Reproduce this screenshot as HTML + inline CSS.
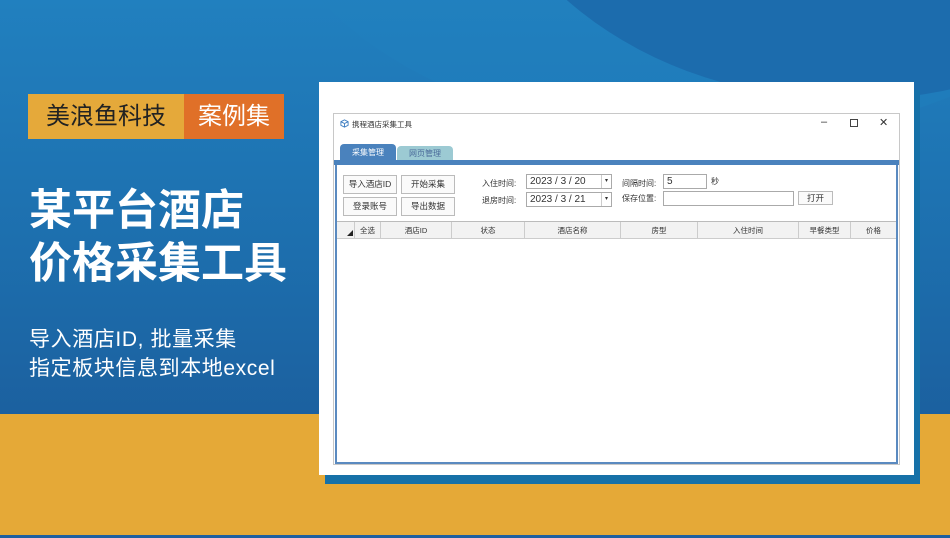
<!DOCTYPE html>
<html><head><meta charset="utf-8"><style>
*{margin:0;padding:0;box-sizing:border-box}
body{width:950px;height:538px;overflow:hidden;position:relative;font-family:"Liberation Sans","Noto Sans CJK SC",sans-serif;background:#1d6aa9}
.bg{position:absolute;inset:0;background:linear-gradient(180deg,#2180bf 0%,#1d6fae 45%,#1b5f9e 80%)}
.curve{position:absolute;left:260px;top:-420px;width:900px;height:560px;border-radius:50%;background:linear-gradient(180deg,#2a93d0,#1e7ab9)}
.curve2{position:absolute;left:470px;top:-500px;width:760px;height:600px;border-radius:50%;background:#1c6cad}
.orange{position:absolute;left:0;top:414px;width:950px;height:121px;background:#e5a937}
.strip{position:absolute;left:0;top:535px;width:950px;height:3px;background:#1e5fa0}
.b1{position:absolute;left:28px;top:94px;width:156px;height:45px;background:#e5a93a;color:#222;font-size:24px;line-height:45px;text-align:center}
.b2{position:absolute;left:184px;top:94px;width:100px;height:45px;background:#e07028;color:#fff;font-size:24px;line-height:45px;text-align:center}
.t{position:absolute;left:29px;color:#fff;font-weight:bold;font-size:43px;line-height:50px}
.s{position:absolute;left:29px;color:#fff;font-size:21px;line-height:30px;letter-spacing:0.6px}
.shadow{position:absolute;left:325px;top:90px;width:595px;height:394px;background:#1671a8}
.panel{position:absolute;left:319px;top:82px;width:595px;height:393px;background:#fff}
.win{position:absolute;left:333px;top:113px;width:567px;height:352px;border:1px solid #c8c8c8;background:#fff;font-size:8px;color:#333}
.tb{position:absolute;left:0;top:0;width:100%;height:21px}
.tab{position:absolute;top:30px;height:18px;line-height:18px;text-align:center;font-size:8px;border-radius:4px 4px 0 0}
.bar{position:absolute;left:0;top:46px;width:565px;height:5px;background:#4a82bd}
.inner{position:absolute;left:1px;top:51px;width:563px;height:299px;border:2px solid #5a8ac0;border-top:none}
.btn{position:absolute;width:54px;height:19px;border:1px solid #bbb;background:#fafafa;text-align:center;line-height:17px;font-size:8.5px}
.lbl{position:absolute;font-size:8px}
.inp{position:absolute;height:15px;border:1px solid #aaa;background:#fff;font-size:10px;line-height:13px;padding-left:3px}
.hdr{position:absolute;left:0;top:56px;width:559px;height:18px;background:#f2f2f2;border-top:1px solid #bbb;border-bottom:1px solid #ccc}
.hdr div{position:absolute;top:0;height:17px;line-height:17px;text-align:center;border-right:1px solid #ccc;font-size:7.5px}
</style></head><body>
<div class="bg"></div><div class="curve"></div><div class="curve2"></div>
<div class="orange"></div><div class="strip"></div>
<div class="b1">美浪鱼科技</div><div class="b2">案例集</div>
<div class="t" style="top:186px">某平台酒店</div>
<div class="t" style="top:239px">价格采集工具</div>
<div class="s" style="top:325px">导入酒店ID, 批量采集</div>
<div class="s" style="top:354px">指定板块信息到本地excel</div>
<div class="shadow"></div>
<div class="panel"></div>
<div class="win">
 <div class="tb">
  <svg style="position:absolute;left:6px;top:5px" width="9" height="9" viewBox="0 0 10 10"><path d="M5 1L9 3V7L5 9L1 7V3Z M1 3L5 5L9 3 M5 5V9" fill="none" stroke="#3a7bc0" stroke-width="1"/></svg>
  <span style="position:absolute;left:18px;top:5px;font-size:7.5px">携程酒店采集工具</span>
  <span style="position:absolute;left:487px;top:2px;font-size:11px">–</span>
  <span style="position:absolute;left:516px;top:5px;width:8px;height:8px;border:1px solid #444"></span>
  <span style="position:absolute;left:545px;top:2px;font-size:11px">✕</span>
 </div>
 <div class="tab" style="left:6px;width:56px;background:#4a82bd;color:#fff">采集管理</div>
 <div class="tab" style="left:63px;width:56px;background:#9ccad3;color:#4a6a9a;top:32px;height:16px;line-height:16px">网页管理</div>
 <div class="bar"></div>
 <div class="inner">
  <div class="btn" style="left:6px;top:10px">导入酒店ID</div>
  <div class="btn" style="left:64px;top:10px">开始采集</div>
  <div class="btn" style="left:6px;top:32px">登录账号</div>
  <div class="btn" style="left:64px;top:32px">导出数据</div>
  <div class="lbl" style="left:145px;top:13px">入住时间:</div>
  <div class="lbl" style="left:145px;top:30px">退房时间:</div>
  <div class="inp" style="left:189px;top:9px;width:86px">2023 / 3 / 20<span style="position:absolute;right:0;top:0;width:10px;height:13px;border-left:1px solid #ccc;font-size:6px;text-align:center">▾</span></div>
  <div class="inp" style="left:189px;top:27px;width:86px">2023 / 3 / 21<span style="position:absolute;right:0;top:0;width:10px;height:13px;border-left:1px solid #ccc;font-size:6px;text-align:center">▾</span></div>
  <div class="lbl" style="left:285px;top:13px">间隔时间:</div>
  <div class="lbl" style="left:285px;top:28px">保存位置:</div>
  <div class="inp" style="left:326px;top:9px;width:44px">5</div>
  <div class="lbl" style="left:374px;top:11px">秒</div>
  <div class="inp" style="left:326px;top:26px;width:131px"></div>
  <div class="btn" style="left:461px;top:26px;width:35px;height:14px;line-height:12px">打开</div>
  <div class="hdr">
   <div style="left:0;width:18px"><span style="position:absolute;left:10px;top:8px;width:0;height:0;border-left:6px solid transparent;border-bottom:6px solid #222"></span></div>
   <div style="left:18px;width:26px">全选</div>
   <div style="left:44px;width:71px">酒店ID</div>
   <div style="left:115px;width:73px">状态</div>
   <div style="left:188px;width:96px">酒店名称</div>
   <div style="left:284px;width:77px">房型</div>
   <div style="left:361px;width:101px">入住时间</div>
   <div style="left:462px;width:52px">早餐类型</div>
   <div style="left:514px;width:45px;border-right:none">价格</div>
  </div>
 </div>
</div>
</body></html>
